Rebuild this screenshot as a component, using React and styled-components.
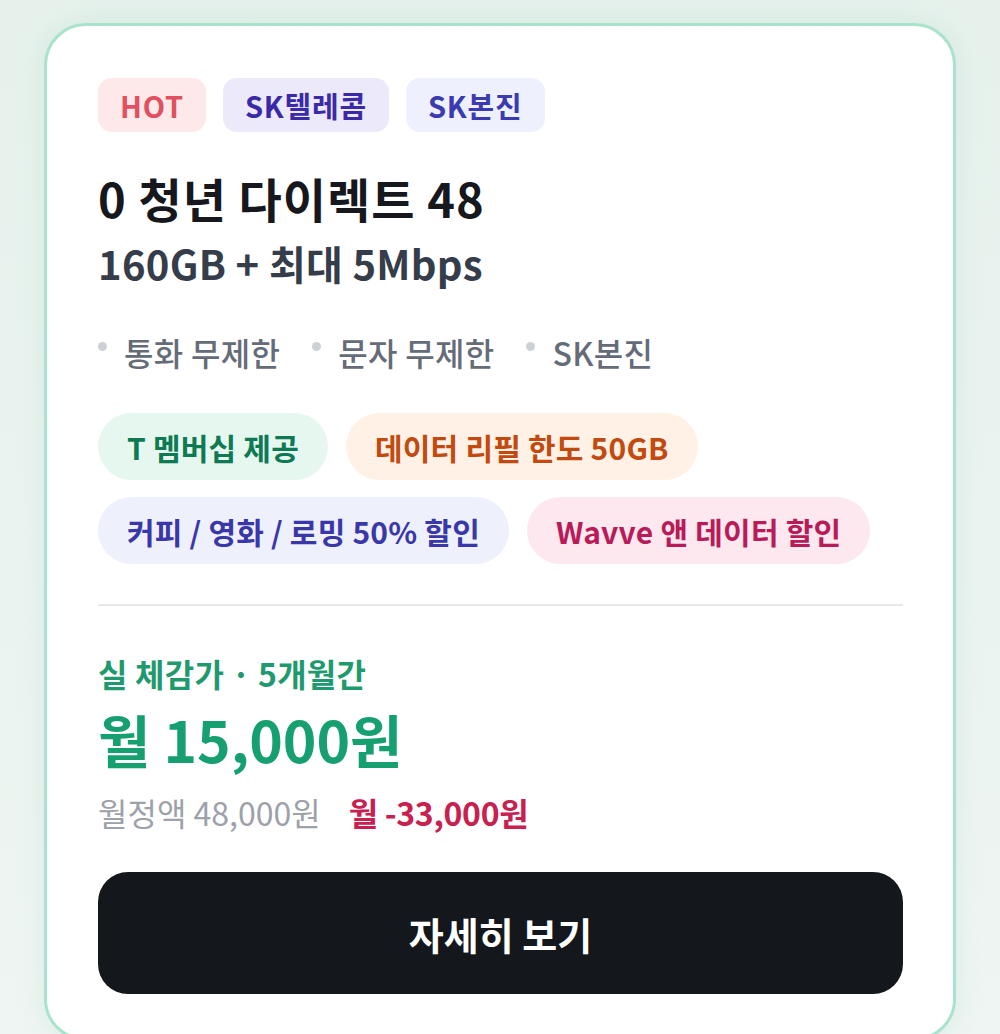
import React from "react";
import styled, { createGlobalStyle } from "styled-components";

const Global = createGlobalStyle`
  html, body { margin: 0; padding: 0; }
  body {
    background: #ecf4f0;
    font-family: "Noto Sans CJK KR", "Noto Sans", sans-serif;
    -webkit-font-smoothing: antialiased;
  }
`;

const Page = styled.div`
  min-height: 1034px;
  padding: 23px 44px 0 44px;
  box-sizing: border-box;
  background: linear-gradient(180deg, #e6f1ec 0%, #eef5f2 100%);
  overflow: hidden;
`;

const Card = styled.div`
  background: #ffffff;
  border: 3px solid #a9e3cc;
  border-radius: 42px;
  padding: 52px 50px 44px 51px;
  box-shadow: 0 0 24px rgba(120, 200, 170, 0.18);
  box-sizing: border-box;
`;

const Badges = styled.div`
  display: flex;
  gap: 17px;
`;

const Badge = styled.span`
  display: inline-flex;
  align-items: center;
  height: 54px;
  padding: 0 22px;
  border-radius: 14px;
  font-size: 29px;
  font-weight: 700;
  letter-spacing: 0.8px;
  background: ${(p) => p.$bg};
  color: ${(p) => p.$fg};
`;

const Title = styled.h1`
  margin: 36px 0 0 0;
  font-size: 47px;
  line-height: 60px;
  font-weight: 600;
  color: #16181d;
  letter-spacing: 1px;
`;

const Subtitle = styled.div`
  margin-top: 7px;
  font-size: 40px;
  line-height: 56px;
  font-weight: 600;
  color: #353c4a;
  letter-spacing: 0.3px;
`;

const Features = styled.ul`
  list-style: none;
  margin: 39px 0 0 0;
  padding: 0;
  display: flex;
  gap: 32px;
`;

const Feature = styled.li`
  display: flex;
  align-items: center;
  font-size: 32px;
  line-height: 44px;
  color: #656c78;
  font-weight: 500;
  letter-spacing: 0.3px;
  &::before {
    content: "";
    width: 9px;
    height: 9px;
    border-radius: 50%;
    background: #cdd1d7;
    margin-right: 17px;
    margin-top: -12px;
  }
`;

const Pills = styled.div`
  display: flex;
  flex-wrap: wrap;
  gap: 17px 18px;
  margin-top: 39px;
`;

const Pill = styled.span`
  display: inline-flex;
  align-items: center;
  height: 67px;
  padding: 0 29px;
  border-radius: 34px;
  font-size: 30px;
  font-weight: 600;
  letter-spacing: 0.2px;
  background: ${(p) => p.$bg};
  color: ${(p) => p.$fg};
`;

const Divider = styled.hr`
  border: none;
  height: 2px;
  background: #e6e8eb;
  margin: 40px 0 0 0;
`;

const PriceLabel = styled.div`
  margin-top: 45px;
  font-size: 32px;
  line-height: 44px;
  font-weight: 600;
  color: #1f9a6e;
  letter-spacing: 0.2px;
`;

const Price = styled.div`
  margin-top: 5px;
  font-size: 57px;
  line-height: 76px;
  font-weight: 700;
  color: #16a070;
`;

const PriceRow = styled.div`
  display: flex;
  gap: 28px;
  margin-top: 14px;
  font-size: 32px;
  line-height: 44px;
`;

const Original = styled.span`
  color: #9ca1aa;
  font-weight: 400;
`;

const Discount = styled.span`
  color: #c8204f;
  font-weight: 700;
  letter-spacing: -0.3px;
`;

const Button = styled.button`
  display: flex;
  align-items: center;
  justify-content: center;
  width: 100%;
  height: 122px;
  margin-top: 38px;
  border: none;
  border-radius: 30px;
  background: #14171b;
  color: #ffffff;
  font-family: inherit;
  font-size: 38px;
  font-weight: 700;
  cursor: pointer;
`;

const badges = [
  { t: "HOT", bg: "#fde8ea", fg: "#e0505e" },
  { t: "SK텔레콤", bg: "#ece9fa", fg: "#3b2aa8" },
  { t: "SK본진", bg: "#eef0fd", fg: "#3b3ab0" },
];

const pills = [
  { t: "T 멤버십 제공", bg: "#e6f7f0", fg: "#0d7a53" },
  { t: "데이터 리필 한도 50GB", bg: "#fff1e5", fg: "#c24a10" },
  { t: "커피 / 영화 / 로밍 50% 할인", bg: "#eef0fc", fg: "#3a37a8" },
  { t: "Wavve 앤 데이터 할인", bg: "#fde8f0", fg: "#b81b58" },
];

export default function App() {
  return (
    <>
      <Global />
      <Page>
        <Card>
          <Badges>
            {badges.map((b) => (
              <Badge key={b.t} $bg={b.bg} $fg={b.fg}>
                {b.t}
              </Badge>
            ))}
          </Badges>
          <Title>0 청년 다이렉트 48</Title>
          <Subtitle>160GB + 최대 5Mbps</Subtitle>
          <Features>
            <Feature>통화 무제한</Feature>
            <Feature>문자 무제한</Feature>
            <Feature>SK본진</Feature>
          </Features>
          <Pills>
            {pills.map((p) => (
              <Pill key={p.t} $bg={p.bg} $fg={p.fg}>
                {p.t}
              </Pill>
            ))}
          </Pills>
          <Divider />
          <PriceLabel>실 체감가 · 5개월간</PriceLabel>
          <Price>월 15,000원</Price>
          <PriceRow>
            <Original>월정액 48,000원</Original>
            <Discount>월 -33,000원</Discount>
          </PriceRow>
          <Button>자세히 보기</Button>
        </Card>
      </Page>
    </>
  );
}
